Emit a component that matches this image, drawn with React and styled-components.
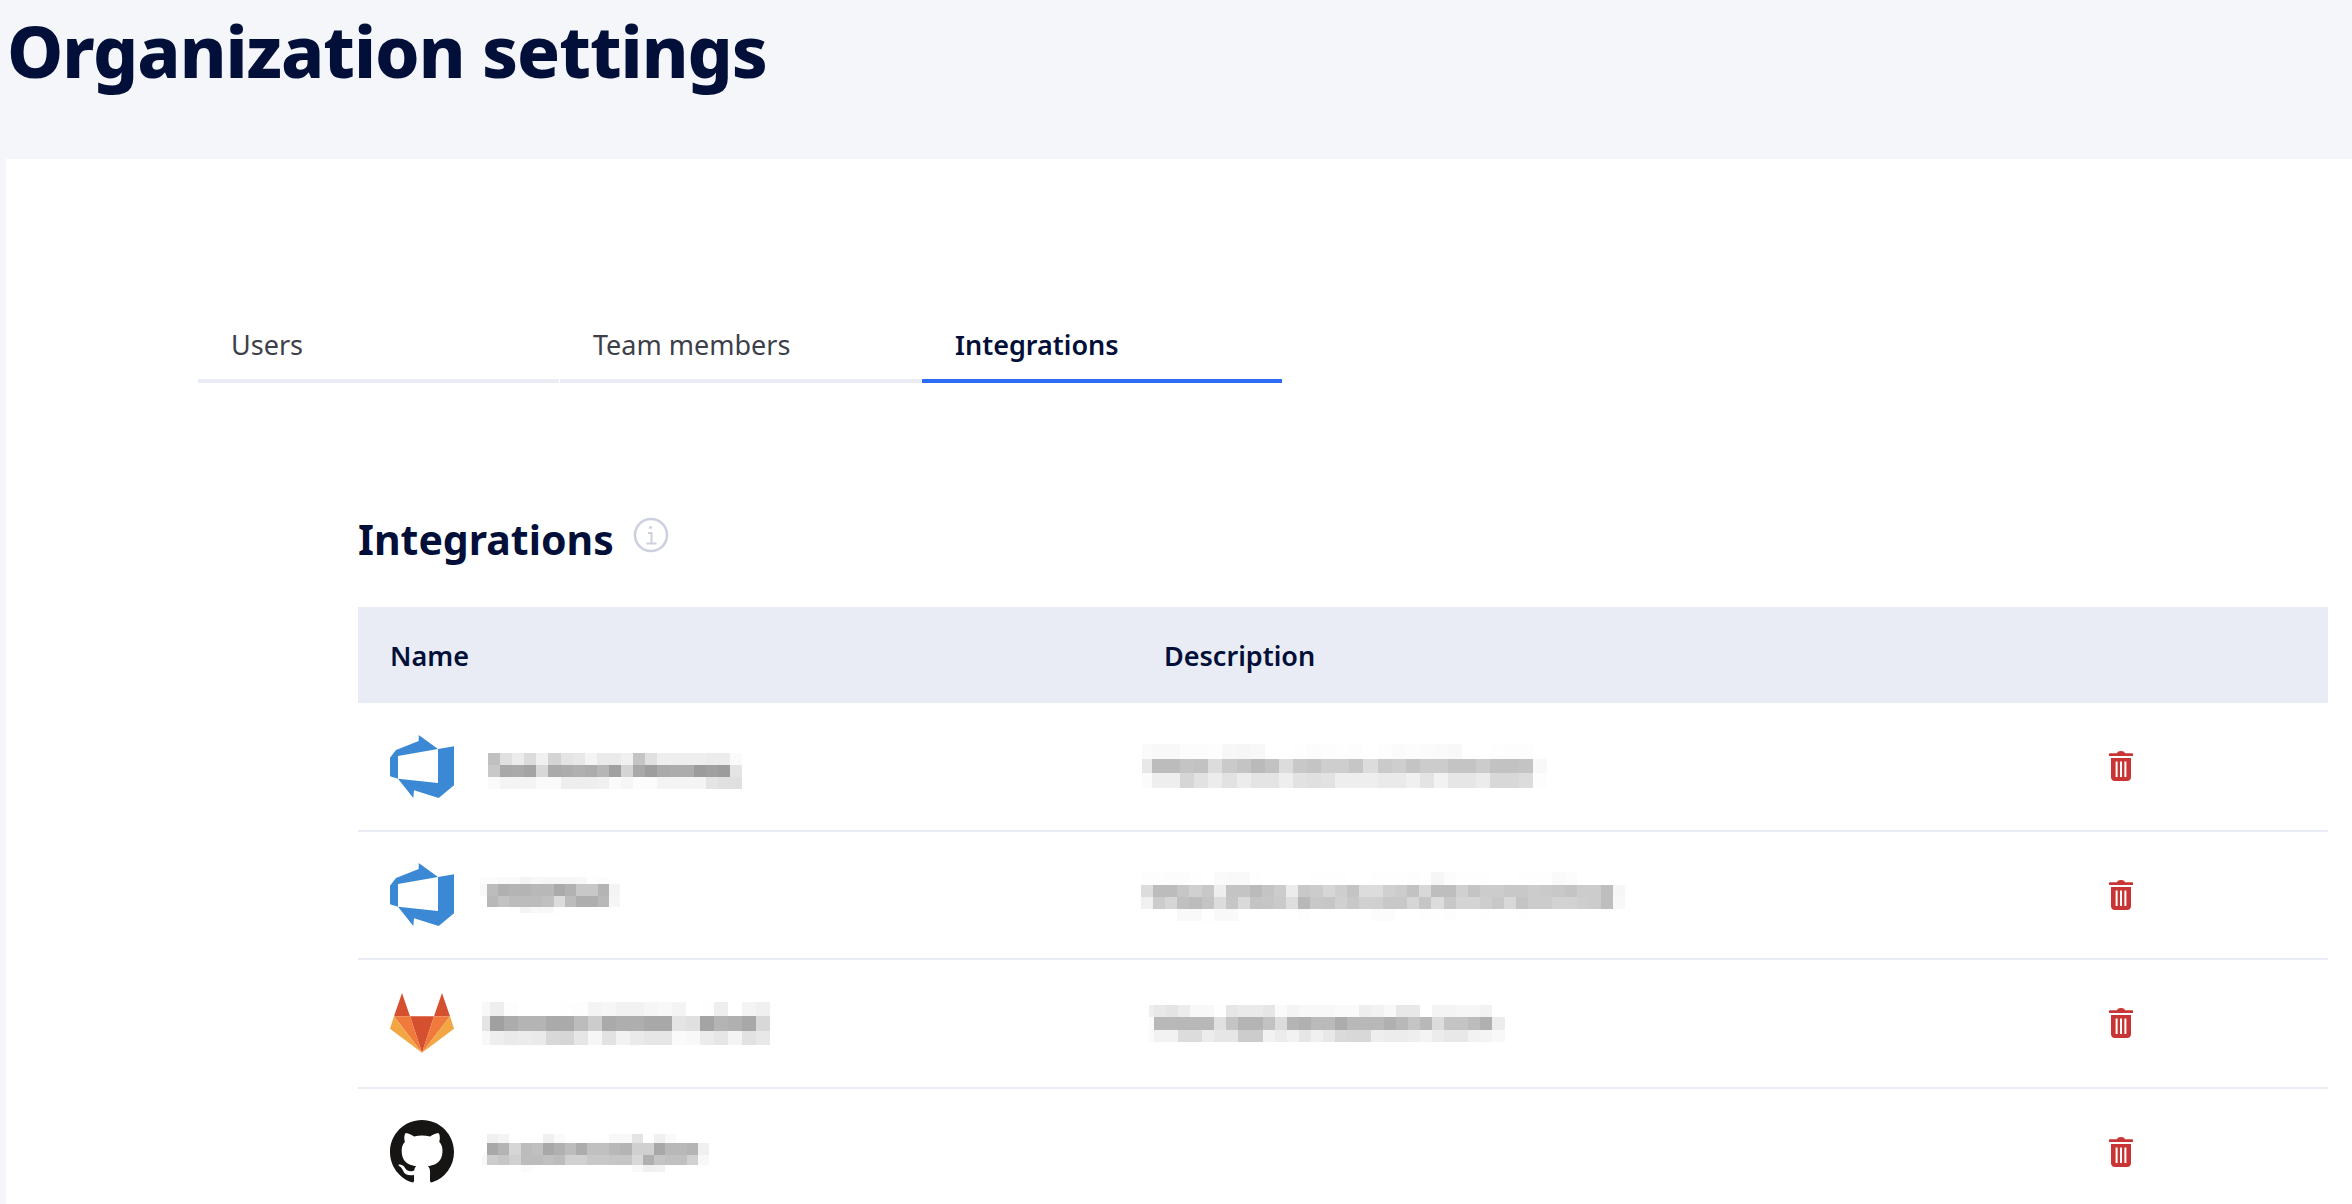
import React from 'react';
import styled, { createGlobalStyle } from 'styled-components';

const GlobalStyle = createGlobalStyle`
  html, body {
    margin: 0;
    height: 100%;
    overflow: hidden;
    background: #f4f6fa;
    font-family: "Noto Sans", "Liberation Sans", sans-serif;
    color: #020f38;
  }
`;

// redacted text, one string of grey values per mosaic row
const integrations = [
  {
    id: 'a',
    logo: 'azure',
    name: {
      offset: 34, top: 10, cell: 12.1, first: 12.1, heights: [12, 12, 12],
      rows: [
        'c0 e0 ec dc f0 d4 e4 e8 f4 ea ea f0 c4 e0 ee ee ee ee ec ec fa',
        'c8 a8 aa a4 d8 aa ac b0 ac b6 a0 d4 a8 9e aa ac ac 9c a0 9c e4',
        'fa f4 f4 f4 fa fa ee ee ee f0 fa f6 fc fc f4 f4 f4 f4 e4 e0 e0',
      ],
    },
    desc: {
      offset: 1, top: 0, cell: 14.1, first: 10, heights: [15, 14, 15],
      rows: [
        'fa f8 f8 fc fc fd f7 f6 f8 ff ff fe fc fd fe fd ff fd fb fc fb fa f8 ff ff fe fd fd ff',
        'e8 bc bc c4 c2 dc ca c4 ba c2 dc c8 c4 ce ce c6 dc ca ce c4 cc cc c4 c4 cc c2 c2 c4 f8',
        'fb ee ee d6 e2 ec e2 ec e4 e4 ee e2 e0 e2 ee ee ee ea ea f0 e4 f2 e6 e6 ec d8 d8 dc fd',
      ],
    },
  },
  {
    id: 'b',
    logo: 'azure',
    name: {
      offset: 26, top: 0, cell: 11.1, first: 7, heights: [7, 12, 11, 6],
      rows: [
        'fc fc fa fa f4 f8 f6 f6 f6 f8 fe fc ff',
        'f8 bc b0 b4 b4 b8 b8 aa b2 c8 c8 b4 f4',
        'ff b8 c2 bc bc bc c0 dc bc ae ae b8 f6',
        'ff ff ff fe f4 f8 f8 fe ff ff ff ff ff',
      ],
    },
    desc: {
      offset: 0, top: 3, cell: 12.1, first: 12.1, heights: [13, 12, 12, 12],
      rows: [
        'fd fd fc fc fe ff fa f9 f9 fe ff ff ff ff fe fe fe ff ff fe fe fe fd fe f6 fc fe fe fe ff ff fe fe fe fa fc ff ff ff ff',
        'dc bc bc c6 d0 c8 ee c4 c4 ba c4 cc ec c8 cc d6 ce c4 dc dc d0 cc c2 d8 be be d0 c4 cc cc c8 c8 cc ca c8 c4 cc cc be f6',
        'f0 cc d6 c0 bc c4 dc c6 da c4 c6 ca de b8 c8 c6 d0 c8 d0 d0 c8 c8 d6 c6 dc c8 d4 d4 ce c8 d8 c4 cc cc d2 d2 ce cc be f8',
        'ff ff ff f9 f9 fe f9 f9 ff ff ff ff ff fd ff ff ff ff ff fc fc ff ff fe fe fd ff ff fe ff ff fe ff ff ff ff ff ff ff ff',
      ],
    },
  },
  {
    id: 'c',
    logo: 'gitlab',
    name: {
      offset: 28, top: 0, cell: 14, first: 8, heights: [14, 15, 14],
      rows: [
        'f8 ee fd ff ff ff fe fd f4 f6 f2 f2 f6 f8 f4 ff fe ee ff f4 f0',
        'e4 a0 ac b4 b4 aa aa bc cc aa ae ae a8 a8 e4 e0 a4 b4 b0 a8 d8',
        'f8 ee ea ec ea d8 d6 e6 f6 e2 f2 ea e6 e6 fa f8 ec e6 f4 e2 e8',
      ],
    },
    desc: {
      offset: 8, top: 0, cell: 12.1, first: 4.6, heights: [12, 13, 12],
      rows: [
        'ee e8 e4 ec f8 f8 fe e6 ea ea e6 fa f4 f8 f8 f8 fa fa ee f2 f8 e8 e8 ff f4 f4 f6 f6 f2 ff',
        'fa b8 b8 b8 b8 b8 e0 c4 b4 b4 c2 dc b4 b0 ba ba ac b8 b8 b8 b0 b8 c4 b8 dc c4 c4 bc b0 ec',
        'fa f2 f2 dc dc ec e6 e6 cc cc f2 ec f2 e6 f0 e8 da d8 d8 ee ec ec ee f4 ec e8 e8 f2 f4 f8',
      ],
    },
  },
  {
    id: 'd',
    logo: 'github',
    name: {
      offset: 28, top: 2, cell: 11.1, first: 5.3, heights: [9, 12, 10, 7],
      rows: [
        'ff f0 f4 ff ff ff f0 fa ff ff ff ff f8 f8 e4 ff f0 fa ff ff ff',
        'ff a8 b4 d6 bc c0 a8 b0 bc ac c0 c0 b8 b4 d0 d0 a8 b8 b8 b4 f0',
        'f8 cc c6 d0 bc bc c0 bc d0 d0 c8 c8 c6 c6 d8 b0 c4 c0 c0 d0 f8',
        'ff ff ff ff fb ff ff ff ff ff ff ff ff ff f8 f0 f2 ff ff ff ff',
      ],
    },
  },
];

const Page = styled.div`
  display: flex;
  flex-direction: column;
  min-height: 100vh;
`;

const Header = styled.header`
  height: 159px;
  padding-left: 7px;
`;

const Title = styled.h1`
  margin: 0;
  font-size: 71px;
  line-height: 102px;
  font-weight: 800;
  letter-spacing: -1px;
  color: #020f38;
`;

const Panel = styled.main`
  flex: 1;
  margin-left: 6px;
  background: #fff;
  padding: 158px 0 0 192px;
`;

const Tabs = styled.nav`
  display: flex;
  gap: 1px;
`;

const Tab = styled.div`
  box-sizing: border-box;
  width: ${(p) => (p.$active ? 360 : 361)}px;
  height: 66px;
  padding: 10px 0 0 33px;
  font-size: 27px;
  line-height: 36px;
  font-weight: ${(p) => (p.$active ? 600 : 400)};
  color: ${(p) => (p.$active ? '#020f38' : '#3d4049')};
  border-bottom: 4px solid ${(p) => (p.$active ? '#2b6cf0' : '#e9ecf4')};
`;

const Section = styled.section`
  margin: 128px 24px 0 160px;
`;

const SectionHead = styled.div`
  display: flex;
  align-items: flex-start;
  gap: 19px;
  height: 96px;
`;

const SectionTitle = styled.h2`
  margin: 0;
  font-size: 41px;
  line-height: 56px;
  font-weight: 700;
  color: #020f38;
`;

const InfoIcon = styled.svg`
  width: 36px;
  height: 36px;
  margin-top: 6px;
`;

const TableHead = styled.div`
  display: grid;
  grid-template-columns: 774px 1fr;
  align-items: center;
  height: 96px;
  padding-left: 32px;
  background: #e9ecf4;
  font-size: 27px;
  font-weight: 600;
  color: #020f38;
`;

const Row = styled.div`
  box-sizing: border-box;
  display: grid;
  grid-template-columns: 751px 968px 1fr;
  align-items: center;
  height: 128.5px;
  padding-left: 32px;
  border-bottom: 2px solid #e9ecf4;
`;

const NameCell = styled.div`
  display: flex;
  align-items: center;
`;

const LogoBox = styled.div`
  display: flex;
  width: 64px;
  flex: none;
`;

const MosaicSvg = styled.svg`
  display: block;
  flex: none;
  margin-left: ${(p) => p.$offset}px;
  margin-top: ${(p) => p.$top}px;
  filter: blur(0.6px);
`;

const DeleteIcon = styled.svg`
  display: block;
  width: 24px;
  height: 30px;
  color: #c93434;
`;

const Mosaic = ({ offset, top, cell, first, heights, rows }) => {
  const parsed = rows.map((r) => r.split(' '));
  const cols = parsed[0].length;
  const width = first + cell * (cols - 1);
  const height = heights.reduce((a, b) => a + b, 0);
  let y = 0;
  return (
    <MosaicSvg $offset={offset} $top={top} width={width} height={height} viewBox={`0 0 ${width} ${height}`} shapeRendering="crispEdges">
      {parsed.map((row, i) => {
        const rowY = y;
        y += heights[i];
        return row.map((v, j) => (
          <rect
            key={`${i}-${j}`}
            x={j === 0 ? 0 : first + cell * (j - 1)}
            y={rowY}
            width={j === 0 ? first : cell}
            height={heights[i]}
            fill={`#${v}${v}${v}`}
          />
        ));
      })}
    </MosaicSvg>
  );
};

const AzureLogo = () => (
  <svg width="64" height="63" viewBox="0 0 64 63">
    <path
      fill="#3b88d4"
      d="M28.7 0L48 14l16-2.7v39L48.7 63 24 55.3 23.3 63 8 43.7 48 48V14L8 21v22.7L0 41.3V22.7L6 15l22.7-9z"
    />
  </svg>
);

const GitlabLogo = () => (
  <svg width="64" height="60" viewBox="0 0 64 60">
    <path fill="#d5502f" d="M12 0l8 23.3H4zM52 0l8 23.3H44zM20 23.3h24L32 59.7z" />
    <path fill="#ef7a3c" d="M4 23.3h16l12 36.4zM60 23.3H44L32 59.7z" />
    <path fill="#f2a644" d="M4 23.3L0 35.7l32 24zM60 23.3l4 12.4-32 24z" />
  </svg>
);

const GithubLogo = () => (
  <svg width="64" height="63" viewBox="0 0 16 15.75">
    <path
      fill="#161514"
      fillRule="evenodd"
      d="M8 0C3.58 0 0 3.58 0 8c0 3.54 2.29 6.53 5.47 7.59.4.07.55-.17.55-.38 0-.19-.01-.82-.01-1.49-2.01.37-2.53-.49-2.69-.94-.09-.23-.48-.94-.82-1.13-.28-.15-.68-.52-.01-.53.63-.01 1.08.58 1.23.82.72 1.21 1.87.87 2.33.66.07-.52.28-.87.51-1.07-1.78-.2-3.64-.89-3.64-3.95 0-.87.31-1.59.82-2.15-.08-.2-.36-1.02.08-2.12 0 0 .67-.21 2.2.82.64-.18 1.32-.27 2-.27.68 0 1.36.09 2 .27 1.53-1.04 2.2-.82 2.2-.82.44 1.1.16 1.92.08 2.12.51.56.82 1.27.82 2.15 0 3.07-1.87 3.75-3.65 3.95.29.25.54.73.54 1.48 0 1.07-.01 1.93-.01 2.2 0 .21.15.46.55.38A8.013 8.013 0 0016 8c0-4.42-3.58-8-8-8z"
    />
  </svg>
);

const logos = { azure: AzureLogo, gitlab: GitlabLogo, github: GithubLogo };

const TrashIcon = () => (
  <DeleteIcon viewBox="0 0 24 30">
    <path
      fill="currentColor"
      fillRule="evenodd"
      d="M8 2.2C8.6.8 9.8 0 12 0s3.4.8 4 2.2h7c.6 0 1 .4 1 1V5H0V3.2c0-.6.4-1 1-1zM2 7h20v19c0 2.4-1.6 4-4 4H6c-2.400 0-4-1.600-4-4zm4.600 3.500v15.500h2V10.500zm4.400 0v15.500h2V10.500zm4.400 0v15.500h2V10.500z"
    />
  </DeleteIcon>
);

const App = () => (
  <Page>
    <GlobalStyle />
    <Header>
      <Title>Organization settings</Title>
    </Header>
    <Panel>
      <Tabs>
        <Tab>Users</Tab>
        <Tab>Team members</Tab>
        <Tab $active>Integrations</Tab>
      </Tabs>
      <Section>
        <SectionHead>
          <SectionTitle>Integrations</SectionTitle>
          <InfoIcon viewBox="0 0 36 36" fill="none" stroke="#cdd0de" strokeWidth="2.6">
            <circle cx="18" cy="18" r="16" />
            <path d="M15 16h3.500v10M13.500 26.500h10" strokeWidth="2" />
            <circle cx="17.500" cy="10.500" r="1.600" fill="#cdd0de" stroke="none" />
          </InfoIcon>
        </SectionHead>
        <TableHead>
          <div>Name</div>
          <div>Description</div>
        </TableHead>
        {integrations.map((item) => {
          const Logo = logos[item.logo];
          return (
            <Row key={item.id}>
              <NameCell>
                <LogoBox>
                  <Logo />
                </LogoBox>
                <Mosaic {...item.name} />
              </NameCell>
              <div>{item.desc && <Mosaic {...item.desc} />}</div>
              <TrashIcon />
            </Row>
          );
        })}
      </Section>
    </Panel>
  </Page>
);

export default App;
